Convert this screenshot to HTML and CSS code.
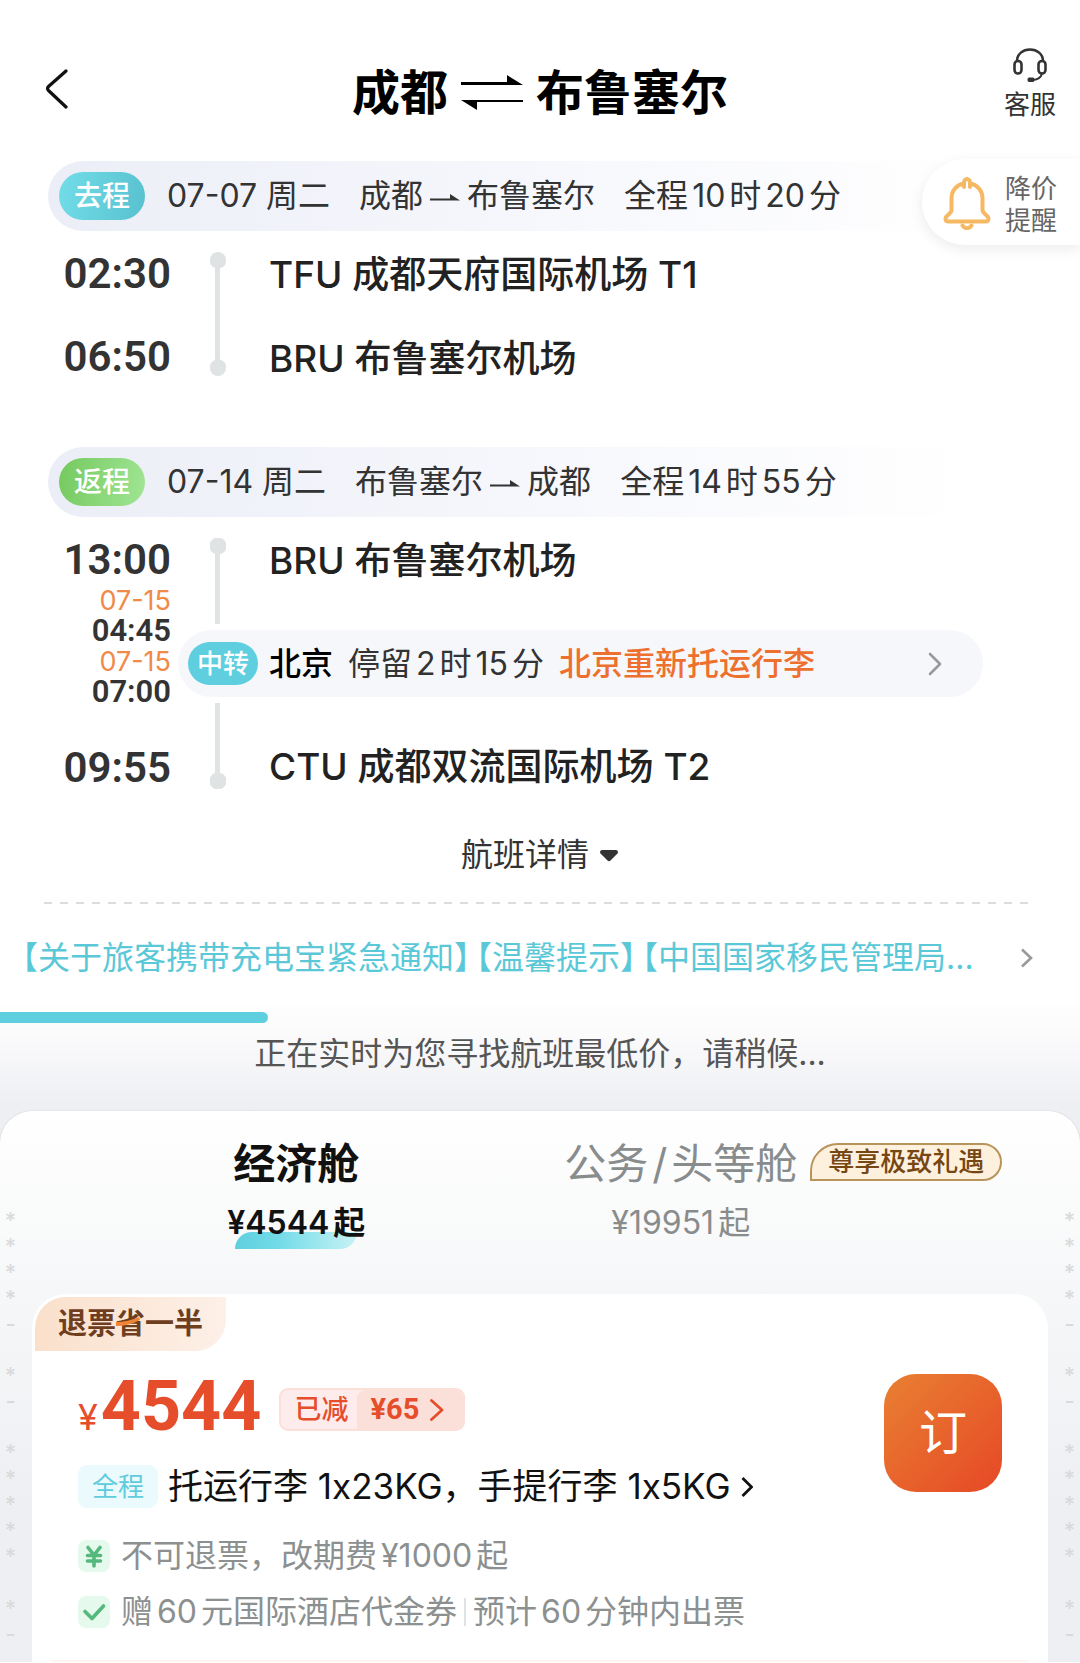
FILE: index.html
```html
<!DOCTYPE html>
<html lang="zh-CN">
<head>
    <meta charset="UTF-8">
    <meta name="viewport" content="width=device-width, initial-scale=1.0">
    <title>成都 - 布鲁塞尔</title>
    <link rel="stylesheet" href="styles.css">
</head>
<body>

    <!-- Top bar -->
    <header class="topbar">
        <button class="back-btn" type="button" aria-label="返回">
            <svg width="24" height="40" viewBox="0 0 24 40"><path d="M21 2 L3.500 17.500 Q1.500 19.500 3.500 21.500 L21 38" fill="none" stroke="#111" stroke-width="3.200" stroke-linecap="round"/></svg>
        </button>
        <h1 class="title">
            <span>成都</span>
            <svg width="62" height="36" viewBox="0 0 62 36" fill="#000"><path d="M0 7h46V0l16 10H0z"/><path d="M62 27H16v8L0 25h62z"/></svg>
            <span>布鲁塞尔</span>
        </h1>
        <button class="support" type="button">
            <svg width="34" height="35" viewBox="0 0 34 35" fill="none" stroke="#333" stroke-width="2.600"><path d="M4 13C4 6 10 1.500 17 1.500S30 6 30 13"/><rect x="1.500" y="13" width="7" height="12.500" rx="3.500"/><rect x="25.500" y="13" width="7" height="12.500" rx="3.500"/><path d="M29 25.500c-1 4-4 6-9 6.500" stroke-width="2"/><rect x="15" y="30" width="6" height="3.500" rx="1" fill="#333" stroke-width="1"/></svg>
            <span>客服</span>
        </button>
    </header>

    <button class="price-alert" type="button">
        <svg width="48" height="54" viewBox="0 0 48 54" fill="none" stroke="#f5b963" stroke-width="4" stroke-linejoin="round" stroke-linecap="round"><path d="M21 11V6.500a3 3.500 0 0 1 6 0V11M21 7.500C13 9 8.500 15 8.500 22v12c0 4-6 5-6 8.500 0 2 1 3 3 3h37c2 0 3-1 3-3 0-3.500-6-4.500-6-8.500V22C39.500 15 35 9 27 7.500"/><path d="M19.500 49.500c2 3.500 7 3.500 9 0"/></svg>
        <span class="alert-text">降价<br>提醒</span>
    </button>

    <main>
        <!-- Outbound leg -->
        <section class="leg">
            <div class="leg-head">
                <span class="leg-badge go">去程</span>
                <span class="leg-date">07-07 周二</span>
                <span class="leg-route">成都<svg class="arrow" width="30" height="8" viewBox="0 0 30 8"><path d="M0 4.500h20V0l10 6.500H0z"/></svg>布鲁塞尔</span>
                <span>全程<i>10</i>时<i>20</i>分</span>
            </div>
            <div class="leg-body direct">
                <div class="times">
                    <span class="time">02:30</span>
                    <span class="time">06:50</span>
                </div>
                <div class="rail both"></div>
                <div class="place">TFU 成都天府国际机场 T1</div>
                <div class="place last">BRU 布鲁塞尔机场</div>
            </div>
        </section>

        <!-- Return leg -->
        <section class="leg">
            <div class="leg-head">
                <span class="leg-badge back">返程</span>
                <span class="leg-date">07-14 周二</span>
                <span class="leg-route">布鲁塞尔<svg class="arrow" width="30" height="8" viewBox="0 0 30 8"><path d="M0 4.500h20V0l10 6.500H0z"/></svg>成都</span>
                <span>全程<i>14</i>时<i>55</i>分</span>
            </div>
            <div class="leg-body transfer">
                <div class="times">
                    <span class="time">13:00</span>
                    <span class="day">07-15</span>
                    <span class="time small">04:45</span>
                    <span class="day">07-15</span>
                    <span class="time small">07:00</span>
                    <span class="time end">09:55</span>
                </div>
                <div class="rail top"></div>
                <div class="place">BRU 布鲁塞尔机场</div>
                <a class="stopover" href="#">
                    <span class="stop-badge">中转</span>
                    <span class="stop-city">北京</span>
                    <span class="stop-time">停留<i>2</i>时<i>15</i>分</span>
                    <span class="stop-warn">北京重新托运行李</span>
                    <svg class="stop-arrow" width="14" height="24" viewBox="0 0 14 24"><path d="M2 2l10 10L2 22" fill="none" stroke="#999" stroke-width="2.600" stroke-linecap="round" stroke-linejoin="round"/></svg>
                </a>
                <div class="rail bottom"></div>
                <div class="place last">CTU 成都双流国际机场 T2</div>
            </div>
        </section>

        <button class="details" type="button">
            航班详情
            <svg width="20" height="13" viewBox="0 0 20 13"><path d="M3 1h14q3 1 1.500 3.500L11.500 11.500q-1.500 1.500-3 0L1.500 4.500Q0 2 3 1z" fill="#333"/></svg>
        </button>
        <hr class="dashes">

        <!-- Notices -->
        <a class="notice" href="#">
            <span class="notice-text"><span>【关于旅客携带充电宝紧急通知】</span><span>【温馨提示】</span><span>【中国国家移民管理局...</span></span>
            <svg width="13" height="20" viewBox="0 0 13 20"><path d="M2 1.500l9 8.500-9 8.500" fill="none" stroke="#999" stroke-width="2.600"/></svg>
        </a>

        <div class="searching">
            <div class="progress"></div>
            <p>正在实时为您寻找航班最低价，请稍候...</p>
        </div>

        <!-- Cabin sheet -->
        <section class="sheet">
            <div class="marks left" aria-hidden="true">
                <b>*</b><b>*</b><b>*</b><b>*</b><s>-</s><b>*</b><s>-</s><b>*</b><b>*</b><b>*</b><b>*</b><b>*</b><b></b><b>*</b><s>-</s>
            </div>
            <div class="marks right" aria-hidden="true">
                <b>*</b><b>*</b><b>*</b><b>*</b><s>-</s><b>*</b><s>-</s><b>*</b><b>*</b><b>*</b><b>*</b><b>*</b><b></b><b>*</b><s>-</s>
            </div>

            <div class="tabs">
                <button class="tab active" type="button">
                    <span class="tab-name">经济舱</span>
                    <span class="tab-price">¥4544<em>起</em></span>
                </button>
                <button class="tab" type="button">
                    <span class="tab-name">公务<i>/</i>头等舱<span class="tab-tag">尊享极致礼遇</span></span>
                    <span class="tab-price">¥19951<em>起</em></span>
                </button>
            </div>

            <article class="card">
                <div class="card-tag">退票<span class="save">省<svg width="24" height="9" viewBox="0 0 24 9"><path d="M0 5Q12 5 23 0l1 3Q13 9 0 9z" fill="#ee8434"/></svg></span>一半</div>
                <div class="card-body">
                    <div class="fare">
                        <div class="price-row">
                            <span class="price"><small>¥</small>4544</span>
                            <button class="discount" type="button">
                                <span class="discount-label">已减</span>
                                <span class="discount-value">¥65
                                    <svg width="14" height="22" viewBox="0 0 14 22"><path d="M1.500 1.500L12 11 1.500 20.500" fill="none" stroke="#e64d2b" stroke-width="2.800" stroke-linecap="round" stroke-linejoin="round"/></svg>
                                </span>
                            </button>
                        </div>
                        <a class="baggage" href="#">
                            <span class="chip">全程</span>
                            <span>托运行李 1x23KG，手提行李 1x5KG</span>
                            <svg width="12" height="20" viewBox="0 0 12 20"><path d="M1.500 1l9 9-9 9" fill="none" stroke="#111" stroke-width="2.800"/></svg>
                        </a>
                    </div>
                    <button class="book" type="button">订</button>
                </div>
                <ul class="rules">
                    <li>
                        <svg width="32" height="32" viewBox="0 0 32 32"><rect width="32" height="32" rx="8" fill="#e6f9ed"/><path d="M10 7.500l6 7.500 6-7.500M16 15v11M9.500 15.500h13M9.500 21h13" fill="none" stroke="#55b87c" stroke-width="3.600" stroke-linecap="round"/></svg>
                        <span>不可退票，改期费<i>¥1000</i>起</span>
                    </li>
                    <li>
                        <svg width="32" height="32" viewBox="0 0 32 32"><rect width="32" height="32" rx="8" fill="#e6f9ed"/><path d="M7 15.500l7 7L25.500 10" fill="none" stroke="#55b87c" stroke-width="3.600" stroke-linecap="round" stroke-linejoin="round"/></svg>
                        <span>赠<i>60</i>元国际酒店代金券</span>
                        <span class="divided">预计<i>60</i>分钟内出票</span>
                    </li>
                </ul>
                <div class="card-foot"></div>
            </article>
        </section>
    </main>

</body>
</html>
```
FILE: styles.css
```css
* {
    box-sizing: border-box;
}

body {
    margin: 0;
    background-color: #fff;
    color: #333;
    font-family: Inter, "Noto Sans CJK SC", sans-serif;
    font-size: 32px;
    line-height: 44px;
    position: relative;
}

button {
    border: none;
    background: none;
    padding: 0;
    margin: 0;
    color: inherit;
    font: inherit;
    cursor: pointer;
}

a {
    color: inherit;
    text-decoration: none;
}

i, em {
    font-style: normal;
}

svg {
    display: block;
    flex: none;
}

/* Top bar */
.topbar {
    display: grid;
    grid-template-columns: 120px 1fr 120px;
    align-items: center;
    height: 161px;
    padding: 40px 0 19px;
}

.back-btn {
    justify-self: start;
    padding: 0 0 4px 45px;
}

.title {
    display: flex;
    justify-content: center;
    align-items: center;
    gap: 13px;
    margin: 0;
    padding-top: 4px;
    color: #000;
    font-size: 48px;
    font-weight: 700;
    line-height: 60px;
}

.support {
    align-self: start;
    justify-self: end;
    display: flex;
    flex-direction: column;
    align-items: center;
    gap: 4px;
    padding: 8px 24px 0 0;
    font-size: 26px;
    line-height: 36px;
}

/* Floating price alert, over the first leg */
.price-alert {
    position: absolute;
    top: 159px;
    right: 0;
    z-index: 2;
    display: flex;
    align-items: center;
    gap: 14px;
    height: 86px;
    padding: 2px 23px 0 21px;
    border-radius: 43px 0 0 43px;
    background-color: #fff;
    box-shadow: 0 4px 14px rgba(0, 0, 0, 0.08);
    color: #666;
    font-size: 26px;
    line-height: 32px;
}

.alert-text {
    padding-top: 3px;
}

/* Flight legs */
.leg + .leg {
    margin-top: 66px;
}

.leg-head {
    display: flex;
    align-items: center;
    gap: 29px;
    height: 70px;
    margin: 0 100px 0 48px;
    padding: 0 0 0 11px;
    border-radius: 35px 0 0 35px;
    background: linear-gradient(90deg, #eceef7, #f6f7fc 50%, #fff);
    white-space: nowrap;
}

.leg-head i, .stopover i, .rules i {
    margin: 0 4px;
}

.leg-badge {
    width: 86px;
    margin-right: -7px;
    border-radius: 24px;
    color: #fff;
    font-size: 28px;
    font-weight: 500;
    line-height: 48px;
    text-align: center;
}

.go {
    background: linear-gradient(100deg, #72dde8, #58c1cf);
}

.back {
    background: linear-gradient(100deg, #75c95f, #a0e594);
}

.leg-route {
    display: flex;
    align-items: center;
    gap: 7px;
}

.arrow {
    margin-top: 4px;
    fill: #333;
}

.leg-body {
    display: grid;
    grid-template-columns: 171px 93px 1fr;
    padding-top: 21px;
}

.direct {
    grid-template-rows: 84px 45px;
}

.transfer {
    grid-template-rows: 92px 67px 92px;
}

.times {
    grid-column: 1;
    grid-row: 1 / -1;
    display: flex;
    flex-direction: column;
    align-items: flex-end;
}

.time {
    font-family: Roboto, sans-serif;
    font-size: 42px;
    font-weight: 600;
    line-height: 44px;
}

.direct .time + .time {
    margin-top: 39px;
}

.time.small {
    font-size: 31px;
    line-height: 30px;
}

.time.end {
    margin-top: 39px;
}

.day {
    color: #f08a48;
    font-size: 27px;
    line-height: 31px;
}

.time + .day {
    margin-top: 3px;
}

.small + .day {
    margin-top: 0;
}

/* Grey line with round ends */
.rail {
    grid-column: 2;
    justify-self: center;
    width: 16px;
    height: 86px;
    background:
        radial-gradient(circle at 50% 8px, #dfe3e3 8px, transparent 9px),
        linear-gradient(#dfe3e3, #dfe3e3) center / 5px 100% no-repeat;
}

.rail.both {
    grid-row: 1 / -1;
    height: 124px;
    border-radius: 8px;
    background:
        radial-gradient(circle at 50% 8px, #dfe3e3 8px, transparent 9px),
        radial-gradient(circle at 50% 116px, #dfe3e3 8px, transparent 9px),
        linear-gradient(#dfe3e3, #dfe3e3) center / 5px 100px no-repeat;
}

.rail.top {
    grid-row: 1;
}

.rail.bottom {
    grid-row: 3;
    align-self: end;
    transform: rotate(180deg);
}

.place {
    grid-column: 3;
    padding: 1px 0 0 5px;
    color: #222;
    font-size: 37px;
    font-weight: 500;
}

.place.last {
    align-self: end;
}

.stopover {
    grid-column: 2 / 4;
    display: flex;
    align-items: center;
    margin: 0 97px 0 7px;
    padding: 0 41px 0 10px;
    border-radius: 34px;
    background-color: #f6f7fb;
}

.stop-badge {
    width: 70px;
    margin-right: 11px;
    border-radius: 22px;
    background-color: #5fcfe0;
    color: #fff;
    font-size: 26px;
    font-weight: 500;
    line-height: 43px;
    text-align: center;
}

.stop-city {
    color: #000;
    font-weight: 500;
}

.stop-time {
    margin: 0 15px;
}

.stop-warn {
    color: #ee702e;
    font-weight: 500;
}

.stop-arrow {
    margin-left: auto;
}

.details {
    display: flex;
    align-items: center;
    gap: 10px;
    margin: 44px auto 25px;
}

.dashes {
    height: 2px;
    margin: 0 48px 0 44px;
    border: none;
    background: repeating-linear-gradient(90deg, #ddd 0, #ddd 8px, transparent 8px, transparent 16px);
}

/* Notices */
.notice {
    display: flex;
    align-items: center;
    justify-content: space-between;
    margin: 32px 47px 20px 22px;
    color: #5bc8d8;
}

.notice-text {
    display: flex;
    gap: 6px;
    font-feature-settings: "halt";
    white-space: nowrap;
}

/* Search progress */
.searching {
    padding: 12px 0 37px;
    background: linear-gradient(#fff, #fbfbfc 30%, #eeeff3 95%);
}

.progress {
    width: 268px;
    height: 11px;
    border-radius: 0 6px 6px 0;
    background-color: #5fcfe0;
}

.searching p {
    margin: 11px 0 0;
    color: #555;
    line-height: 40px;
    text-align: center;
}

main {
    background: linear-gradient(#fff, #fff) top / 100% 839px no-repeat #eeeff3;
}

/* Cabin sheet */
.sheet {
    position: relative;
    padding-top: 30px;
    border-radius: 32px 32px 0 0;
    background: linear-gradient(#fff, #f6f7f8 180px, #eeeff3 400px);
    box-shadow: 0 0 1px #999;
    overflow: hidden;
}

.marks {
    position: absolute;
    top: 91px;
    width: 21px;
    color: #d8dadb;
    font-size: 22px;
    text-align: center;
}

.marks.left {
    left: 0;
}

.marks.right {
    right: 0;
}

.marks b, .marks s {
    display: block;
    height: 26px;
    font-weight: 500;
    line-height: 36px;
    text-decoration: none;
}

.marks s {
    height: 51px;
}

.tabs {
    display: grid;
    grid-template-columns: 1fr 1fr;
    padding: 0 207px 51px 104px;
}

.tab {
    display: flex;
    flex-direction: column;
    align-items: center;
    gap: 16px;
    color: #888c8c;
}

.tab-name {
    position: relative;
    font-size: 42px;
    line-height: 46px;
    white-space: nowrap;
}

.tab-name i {
    margin: 0 4px;
}

.tab-price {
    position: relative;
    z-index: 0;
    line-height: 40px;
}

.tab-price em {
    margin-left: 4px;
}

.active {
    color: #111;
}

.active .tab-name, .active .tab-price {
    font-weight: 600;
}

.active .tab-price::after {
    content: "";
    position: absolute;
    left: 8px;
    right: 8px;
    top: 29px;
    z-index: -1;
    height: 17px;
    border-radius: 17px 0 17px 0;
    background: linear-gradient(90deg, #5fcfe0, #72dbe8 35%, #c8f2f5);
}

.tab-tag {
    position: absolute;
    left: 100%;
    top: 2px;
    margin-left: 13px;
    padding: 0 16px;
    border: 2px solid #b8935a;
    border-radius: 28px 19px 19px 0;
    background-color: #fdf1de;
    color: #774713;
    font-size: 26px;
    font-weight: 500;
    line-height: 34px;
}

/* Fare card */
.card {
    margin: 0 32px;
    padding-top: 3px;
    border-radius: 34px 34px 0 0;
    background-color: #fff;
}

.card-tag {
    width: 191px;
    margin-left: 3px;
    border-radius: 31px 0 31px 0;
    background: linear-gradient(90deg, #fae0cb, #fdf0e8);
    color: #6f3e1e;
    font-size: 29px;
    font-weight: 700;
    line-height: 54px;
    text-align: center;
}

.save {
    position: relative;
}

.save svg {
    position: absolute;
    left: 0;
    top: 11px;
}

.card-body {
    display: flex;
    justify-content: space-between;
    padding: 20px 46px 0;
}

.price-row {
    display: flex;
    align-items: flex-end;
    gap: 18px;
    height: 66px;
}

.price {
    color: #e64d2b;
    font-family: Roboto, sans-serif;
    font-size: 70px;
    font-weight: 700;
    line-height: 62px;
}

.price small {
    margin-right: 3px;
    font-family: Inter, sans-serif;
    font-size: 36px;
    font-weight: 400;
    line-height: 36px;
}

.discount {
    display: flex;
    height: 43px;
    margin-bottom: 6px;
    border: 2px solid #fae0d9;
    border-radius: 9px;
    background-color: #fdeceb;
    color: #e64d2b;
    font-size: 27px;
    font-weight: 500;
    line-height: 39px;
    overflow: hidden;
}

.discount-label {
    padding: 0 9px 0 13px;
}

.discount-value {
    display: flex;
    align-items: center;
    gap: 11px;
    padding: 0 19px 0 13px;
    border-radius: 9px 0 0 0;
    background-color: #fae0d9;
    font-family: Roboto, sans-serif;
    font-size: 29px;
    font-weight: 700;
}

.baggage {
    display: flex;
    align-items: center;
    gap: 10px;
    margin-top: 28px;
    color: #111;
    font-size: 35px;
    line-height: 43px;
}

.chip {
    padding: 0 14px;
    border-radius: 9px;
    background-color: #ebfafd;
    color: #5fcbdc;
    font-size: 26px;
}

.book {
    width: 118px;
    height: 118px;
    margin-top: 3px;
    border-radius: 32px;
    background: linear-gradient(135deg, #e98032, #e64826);
    color: #fff;
    font-size: 48px;
}

.rules {
    display: flex;
    flex-direction: column;
    gap: 12px;
    margin: 0;
    padding: 26px 46px 26px;
    color: #8c9090;
    list-style: none;
}

.rules li {
    display: flex;
    align-items: center;
}

.rules svg {
    margin-right: 11px;
}

.divided {
    position: relative;
    margin-left: 16px;
}

.divided::before {
    content: "";
    position: absolute;
    left: -9px;
    top: 8px;
    width: 2px;
    height: 28px;
    background-color: #dfe3e3;
}

.card-foot {
    height: 2px;
    margin: 0 20px;
    border-radius: 2px 2px 0 0;
    background-color: #fef5ee;
}
```
